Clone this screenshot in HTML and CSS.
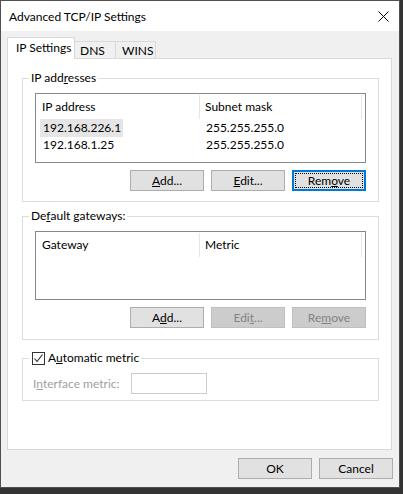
FILE: index.html
```html
<!DOCTYPE html>
<html lang="en">
<head>
    <meta charset="UTF-8">
    <meta name="viewport" content="width=device-width, initial-scale=1.0">
    <title>Advanced TCP/IP Settings</title>
    <link rel="stylesheet" href="styles.css">
</head>
<body>
    <div class="dialog">
        <div class="titlebar">
            <span class="title">Advanced TCP/IP Settings</span>
            <button class="close" aria-label="Close">
                <svg width="11" height="11" viewBox="0 0 11 11">
                    <path d="M0.5 0.5 L10.5 10.5 M10.5 0.5 L0.5 10.5" stroke="#000" stroke-width="1" fill="none"/>
                </svg>
            </button>
        </div>

        <div class="dialog-body">
            <div class="tabs">
                <div class="tab active">IP Settings</div>
                <div class="tab tab-dns">DNS</div>
                <div class="tab tab-wins">WINS</div>
            </div>

            <div class="tab-panel">
                <!-- IP addresses -->
                <fieldset class="group group-ip">
                    <legend>IP add<u>r</u>esses</legend>
                    <div class="group-body">
                        <div class="listview lv-ip">
                            <div class="lv-header">
                                <div class="lv-col col-1">IP address</div>
                                <div class="lv-col col-2">Subnet mask</div>
                            </div>
                            <div class="lv-row">
                                <div class="lv-cell col-1"><span class="selected">192.168.226.1</span></div>
                                <div class="lv-cell col-2">255.255.255.0</div>
                            </div>
                            <div class="lv-row">
                                <div class="lv-cell col-1"><span>192.168.1.25</span></div>
                                <div class="lv-cell col-2">255.255.255.0</div>
                            </div>
                        </div>
                        <div class="btn-row">
                            <button class="btn"><u>A</u>dd...</button>
                            <button class="btn"><u>E</u>dit...</button>
                            <button class="btn focused"><span>Rem<u>o</u>ve</span></button>
                        </div>
                    </div>
                </fieldset>

                <!-- Default gateways -->
                <fieldset class="group group-gw">
                    <legend>De<u>f</u>ault gateways:</legend>
                    <div class="group-body">
                        <div class="listview lv-gw">
                            <div class="lv-header">
                                <div class="lv-col col-1">Gateway</div>
                                <div class="lv-col col-2">Metric</div>
                            </div>
                        </div>
                        <div class="btn-row">
                            <button class="btn">A<u>d</u>d...</button>
                            <button class="btn" disabled>Edi<u>t</u>...</button>
                            <button class="btn" disabled>Re<u>m</u>ove</button>
                        </div>
                    </div>
                </fieldset>

                <!-- Automatic metric -->
                <fieldset class="group group-metric">
                    <legend>
                        <label class="check">
                            <span class="checkbox">
                                <svg width="11" height="11" viewBox="0 0 11 11">
                                    <path d="M1.5 5.5 L4 8.5 L9.5 1.5" stroke="#222" stroke-width="1.1" fill="none"/>
                                </svg>
                            </span>
                            <span>A<u>u</u>tomatic metric</span>
                        </label>
                    </legend>
                    <div class="metric-row">
                        <span class="metric-label">I<u>n</u>terface metric:</span>
                        <span class="textbox"></span>
                    </div>
                </fieldset>
            </div>

            <div class="dialog-buttons">
                <button class="btn">OK</button>
                <button class="btn">Cancel</button>
            </div>
        </div>
    </div>
</body>
</html>
```

FILE: styles.css
```css
/* Windows style dialog */
body {
    margin: 0;
    background: #333;
    font-family: "Segoe UI", Lato, "Noto Sans", Arial, sans-serif;
    font-size: 12px;
    color: #000;
}

.dialog {
    width: 398px;
    height: 486px;
    border: 1px solid #505050;
    background: #f0f0f0;
    display: flex;
    flex-direction: column;
}

.titlebar {
    height: 30px;
    flex: none;
    background: #fff;
    display: flex;
    align-items: center;
    padding-left: 8px;
}

.title {
    flex: 1;
    font-size: 12px;
    margin-top: 1px;
}

.close {
    background: transparent;
    border: none;
    padding: 0;
    width: 11px;
    height: 11px;
    margin-right: 10px;
    margin-top: 1px;
    display: flex;
}

.dialog-body {
    padding: 0 6px;
}

/* Tabs */
.tabs {
    display: flex;
    align-items: flex-end;
    margin-top: 6px;
}

.tab {
    box-sizing: border-box;
    height: 17px;
    line-height: 17px;
    padding-left: 5px;
    border-top: 1px solid #d9d9d9;
    border-right: 1px solid #d9d9d9;
    background: #f0f0f0;
}

.tab.active {
    position: relative;
    z-index: 1;
    width: 68px;
    height: 22px;
    line-height: 20px;
    padding-left: 8px;
    border-left: 1px solid #d9d9d9;
    background: #fff;
    margin-bottom: -1px;
}

.tab-dns {
    width: 41px;
}

.tab-wins {
    width: 40px;
    padding-left: 6px;
}

.tab-panel {
    height: 379px;
    margin-right: 1px;
    background: #fff;
    border: 1px solid #d9d9d9;
    padding: 11px 12px 0 14px;
}

/* Group boxes */
.group {
    margin: 0;
    padding: 0;
    border: 1px solid #dcdcdc;
    min-width: 0;
}

.group legend {
    margin-left: 6px;
    padding: 0 2px;
    line-height: 16px;
}

.group-body {
    padding: 7px 12px 10px;
}

.group-gw {
    margin-top: 6px;
}

.group-gw .group-body {
    padding-bottom: 11px;
}

.group-metric {
    margin-top: 10px;
}

/* List views */
.listview {
    border: 1px solid #828790;
    background: #fff;
}

.lv-ip {
    height: 68px;
}

.lv-gw {
    height: 67px;
}

.lv-header {
    display: flex;
    height: 25px;
    align-items: flex-end;
}

.lv-col {
    height: 24px;
    line-height: 24px;
    border-right: 1px solid #e5e5e5;
    box-sizing: border-box;
    padding-left: 6px;
}

.col-1 {
    width: 164px;
}

.col-2 {
    width: 162px;
    padding-left: 5px;
}

.lv-row {
    display: flex;
    height: 17px;
    line-height: 17px;
}

.lv-cell.col-1 {
    padding-left: 4px;
}

.lv-cell.col-1 span {
    padding: 0 2px 0 3px;
    display: inline-block;
}

.lv-cell.col-2 {
    padding-left: 5px;
}

.selected {
    background: #e5e5e5;
    height: 18px;
}

/* Buttons */
.btn-row {
    display: flex;
    justify-content: flex-end;
    gap: 7px;
    margin-top: 7px;
}

.btn {
    width: 74px;
    height: 21px;
    padding: 0;
    font: inherit;
    color: #000;
    background: #e1e1e1;
    border: 1px solid #adadad;
}

.btn:disabled {
    background: #cccccc;
    border-color: #bfbfbf;
    color: #838383;
}

.btn.focused {
    border: 2px solid #0078d7;
    padding: 1px;
}

.btn.focused span {
    display: block;
    height: 100%;
    box-sizing: border-box;
    border: 1px dotted #000;
    line-height: 13px;
}

/* Automatic metric */
.group-metric legend {
    padding: 0 2px 0 3px;
}

.check {
    display: flex;
    align-items: center;
    gap: 3px;
}

.checkbox {
    width: 11px;
    height: 11px;
    border: 1px solid #333;
    display: flex;
    background: #fff;
}

.metric-row {
    display: flex;
    align-items: center;
    padding: 7px 10px 6px;
}

.metric-label {
    width: 98px;
    color: #a0a0a0;
}

.textbox {
    width: 74px;
    height: 19px;
    border: 1px solid #cccccc;
    background: #fff;
}

/* OK / Cancel */
.dialog-buttons {
    display: flex;
    justify-content: flex-end;
    gap: 7px;
    margin-top: 8px;
}
```
